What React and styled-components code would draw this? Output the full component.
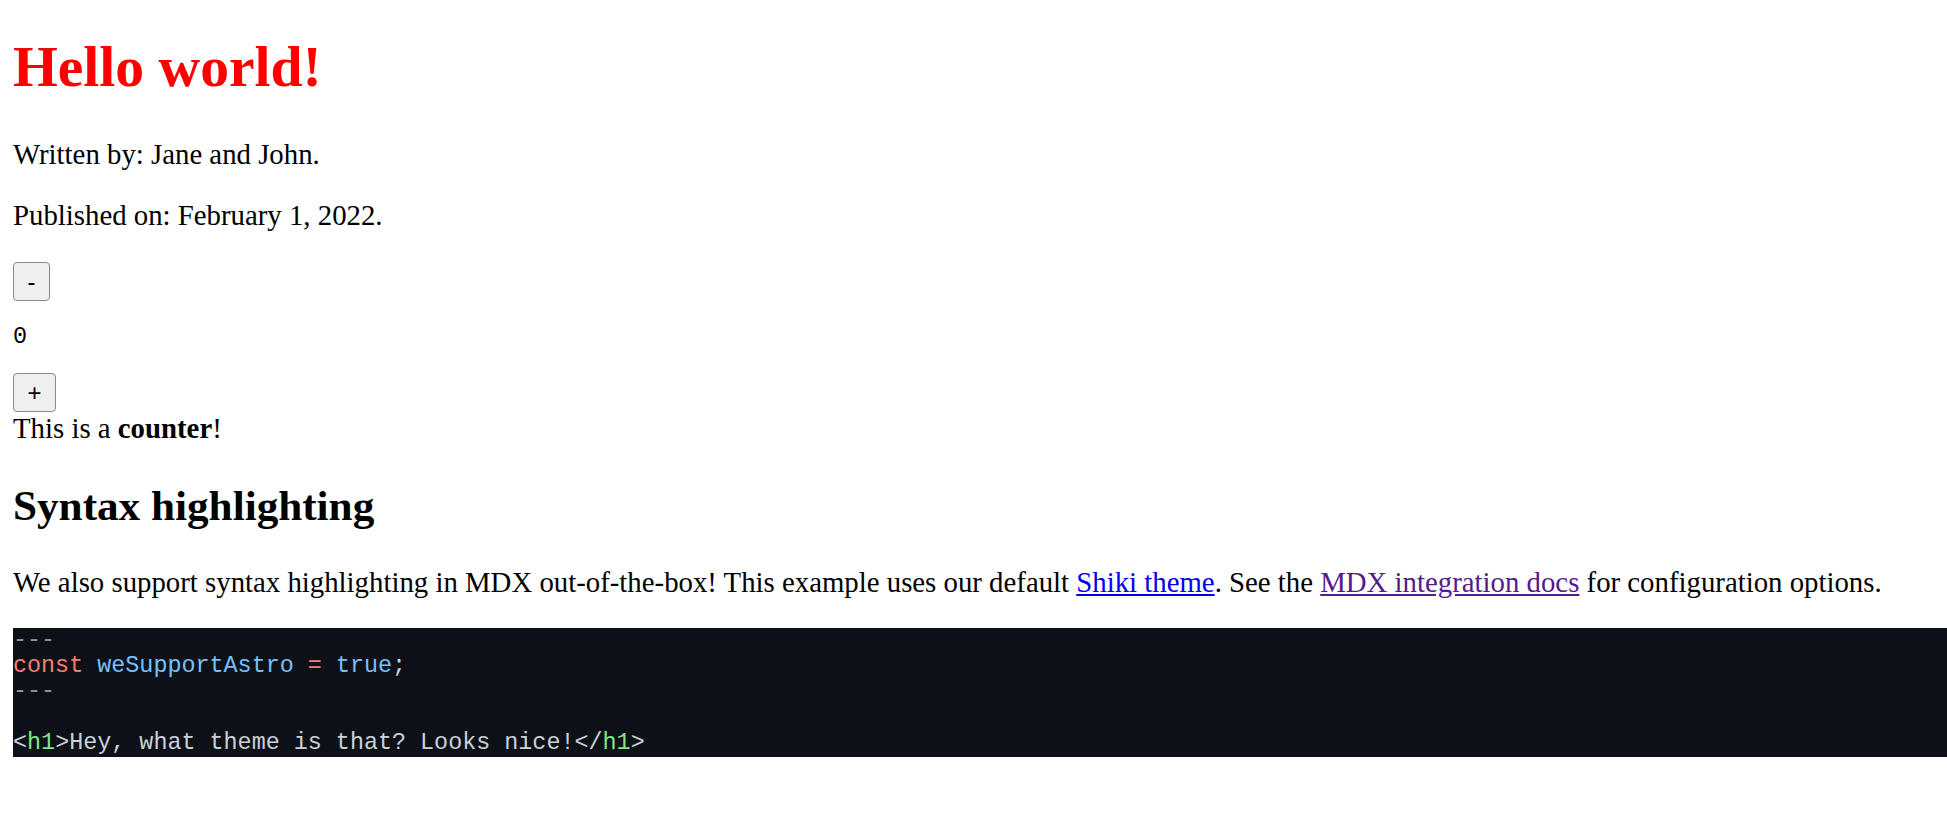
import React, { useState } from "react";
import styled, { createGlobalStyle } from "styled-components";

const GlobalStyle = createGlobalStyle`
  html, body {
    margin: 0;
    padding: 0;
    background: #ffffff;
  }
  body {
    font-family: "Liberation Serif", "Times New Roman", serif;
    font-size: 28.8px;
    color: #000000;
  }
`;

const Page = styled.main`
  display: flow-root;
  padding: 0 0 23px 13px;
`;

const Title = styled.h1`
  margin: 34px 0 38.6px;
  font-size: 57.6px;
  font-weight: 700;
  line-height: normal;
  color: #ff0000;
`;

const Text = styled.p`
  margin: 28.8px 0;
  font-size: 28.8px;
  line-height: normal;
`;

const SectionTitle = styled.h2`
  margin: 35.9px 0;
  font-size: 43.2px;
  font-weight: 700;
  line-height: normal;
`;

const Counter = styled.div`
  display: flex;
  flex-direction: column;
  align-items: flex-start;
  margin-top: 30px;
`;

const CountButton = styled.button`
  box-sizing: border-box;
  width: ${(p) => p.$w}px;
  height: 39px;
  padding: 0;
  margin: 0;
  font-family: "Liberation Sans", Arial, sans-serif;
  font-size: 24px;
  line-height: 1;
  color: #000000;
  background: #efefef;
  border: 1.5px solid #8a8a8a;
  border-radius: 4px;
  cursor: pointer;
`;

const CountValue = styled.pre`
  margin: 23.4px 0 22.6px;
  font-family: "Liberation Mono", "Courier New", monospace;
  font-size: 23.4px;
  line-height: 25.8px;
`;

const CounterMessage = styled.div`
  font-size: 28.8px;
  line-height: normal;
`;

const Link = styled.a`
  color: ${(p) => (p.$visited ? "#551a8b" : "#0000ee")};
  text-decoration: underline;
`;

const CodeBlock = styled.pre`
  margin: 28.8px 0 23.4px;
  padding: 0;
  background: #0d1117;
  color: #c9d1d9;
  font-family: "Liberation Mono", "Courier New", monospace;
  font-size: 23.4px;
  line-height: 25.8px;
  overflow-x: auto;
`;

const Code = styled.code`
  display: block;
  font-family: inherit;
`;

const Line = styled.span`
  display: block;
  min-height: 25.8px;
  white-space: pre;
`;

const Tok = styled.span`
  color: ${(p) => p.$c};
`;

const C = {
  gray: "#8b949e",
  red: "#ff7b72",
  blue: "#79c0ff",
  text: "#c9d1d9",
  green: "#7ee787",
};

export default function App() {
  const [count, setCount] = useState(0);
  return (
    <>
      <GlobalStyle />
      <Page>
        <Title>Hello world!</Title>
        <Text>Written by: Jane and John.</Text>
        <Text>Published on: February 1, 2022.</Text>
        <Counter>
          <CountButton $w={37} onClick={() => setCount((c) => c - 1)}>-</CountButton>
          <CountValue>{count}</CountValue>
          <CountButton $w={43} onClick={() => setCount((c) => c + 1)}>+</CountButton>
        </Counter>
        <CounterMessage>
          This is a <strong>counter</strong>!
        </CounterMessage>
        <SectionTitle>Syntax highlighting</SectionTitle>
        <Text>
          We also support syntax highlighting in MDX out-of-the-box! This example uses our default{" "}
          <Link href="#">Shiki theme</Link>. See the{" "}
          <Link href="#" $visited>MDX integration docs</Link> for configuration options.
        </Text>
        <CodeBlock>
          <Code>
            <Line><Tok $c={C.gray}>---</Tok></Line>
            <Line>
              <Tok $c={C.red}>const</Tok> <Tok $c={C.blue}>weSupportAstro</Tok>{" "}
              <Tok $c={C.red}>=</Tok> <Tok $c={C.blue}>true</Tok>
              <Tok $c={C.text}>;</Tok>
            </Line>
            <Line><Tok $c={C.gray}>---</Tok></Line>
            <Line> </Line>
            <Line>
              <Tok $c={C.text}>&lt;</Tok>
              <Tok $c={C.green}>h1</Tok>
              <Tok $c={C.text}>&gt;Hey, what theme is that? Looks nice!&lt;/</Tok>
              <Tok $c={C.green}>h1</Tok>
              <Tok $c={C.text}>&gt;</Tok>
            </Line>
          </Code>
        </CodeBlock>
      </Page>
    </>
  );
}
